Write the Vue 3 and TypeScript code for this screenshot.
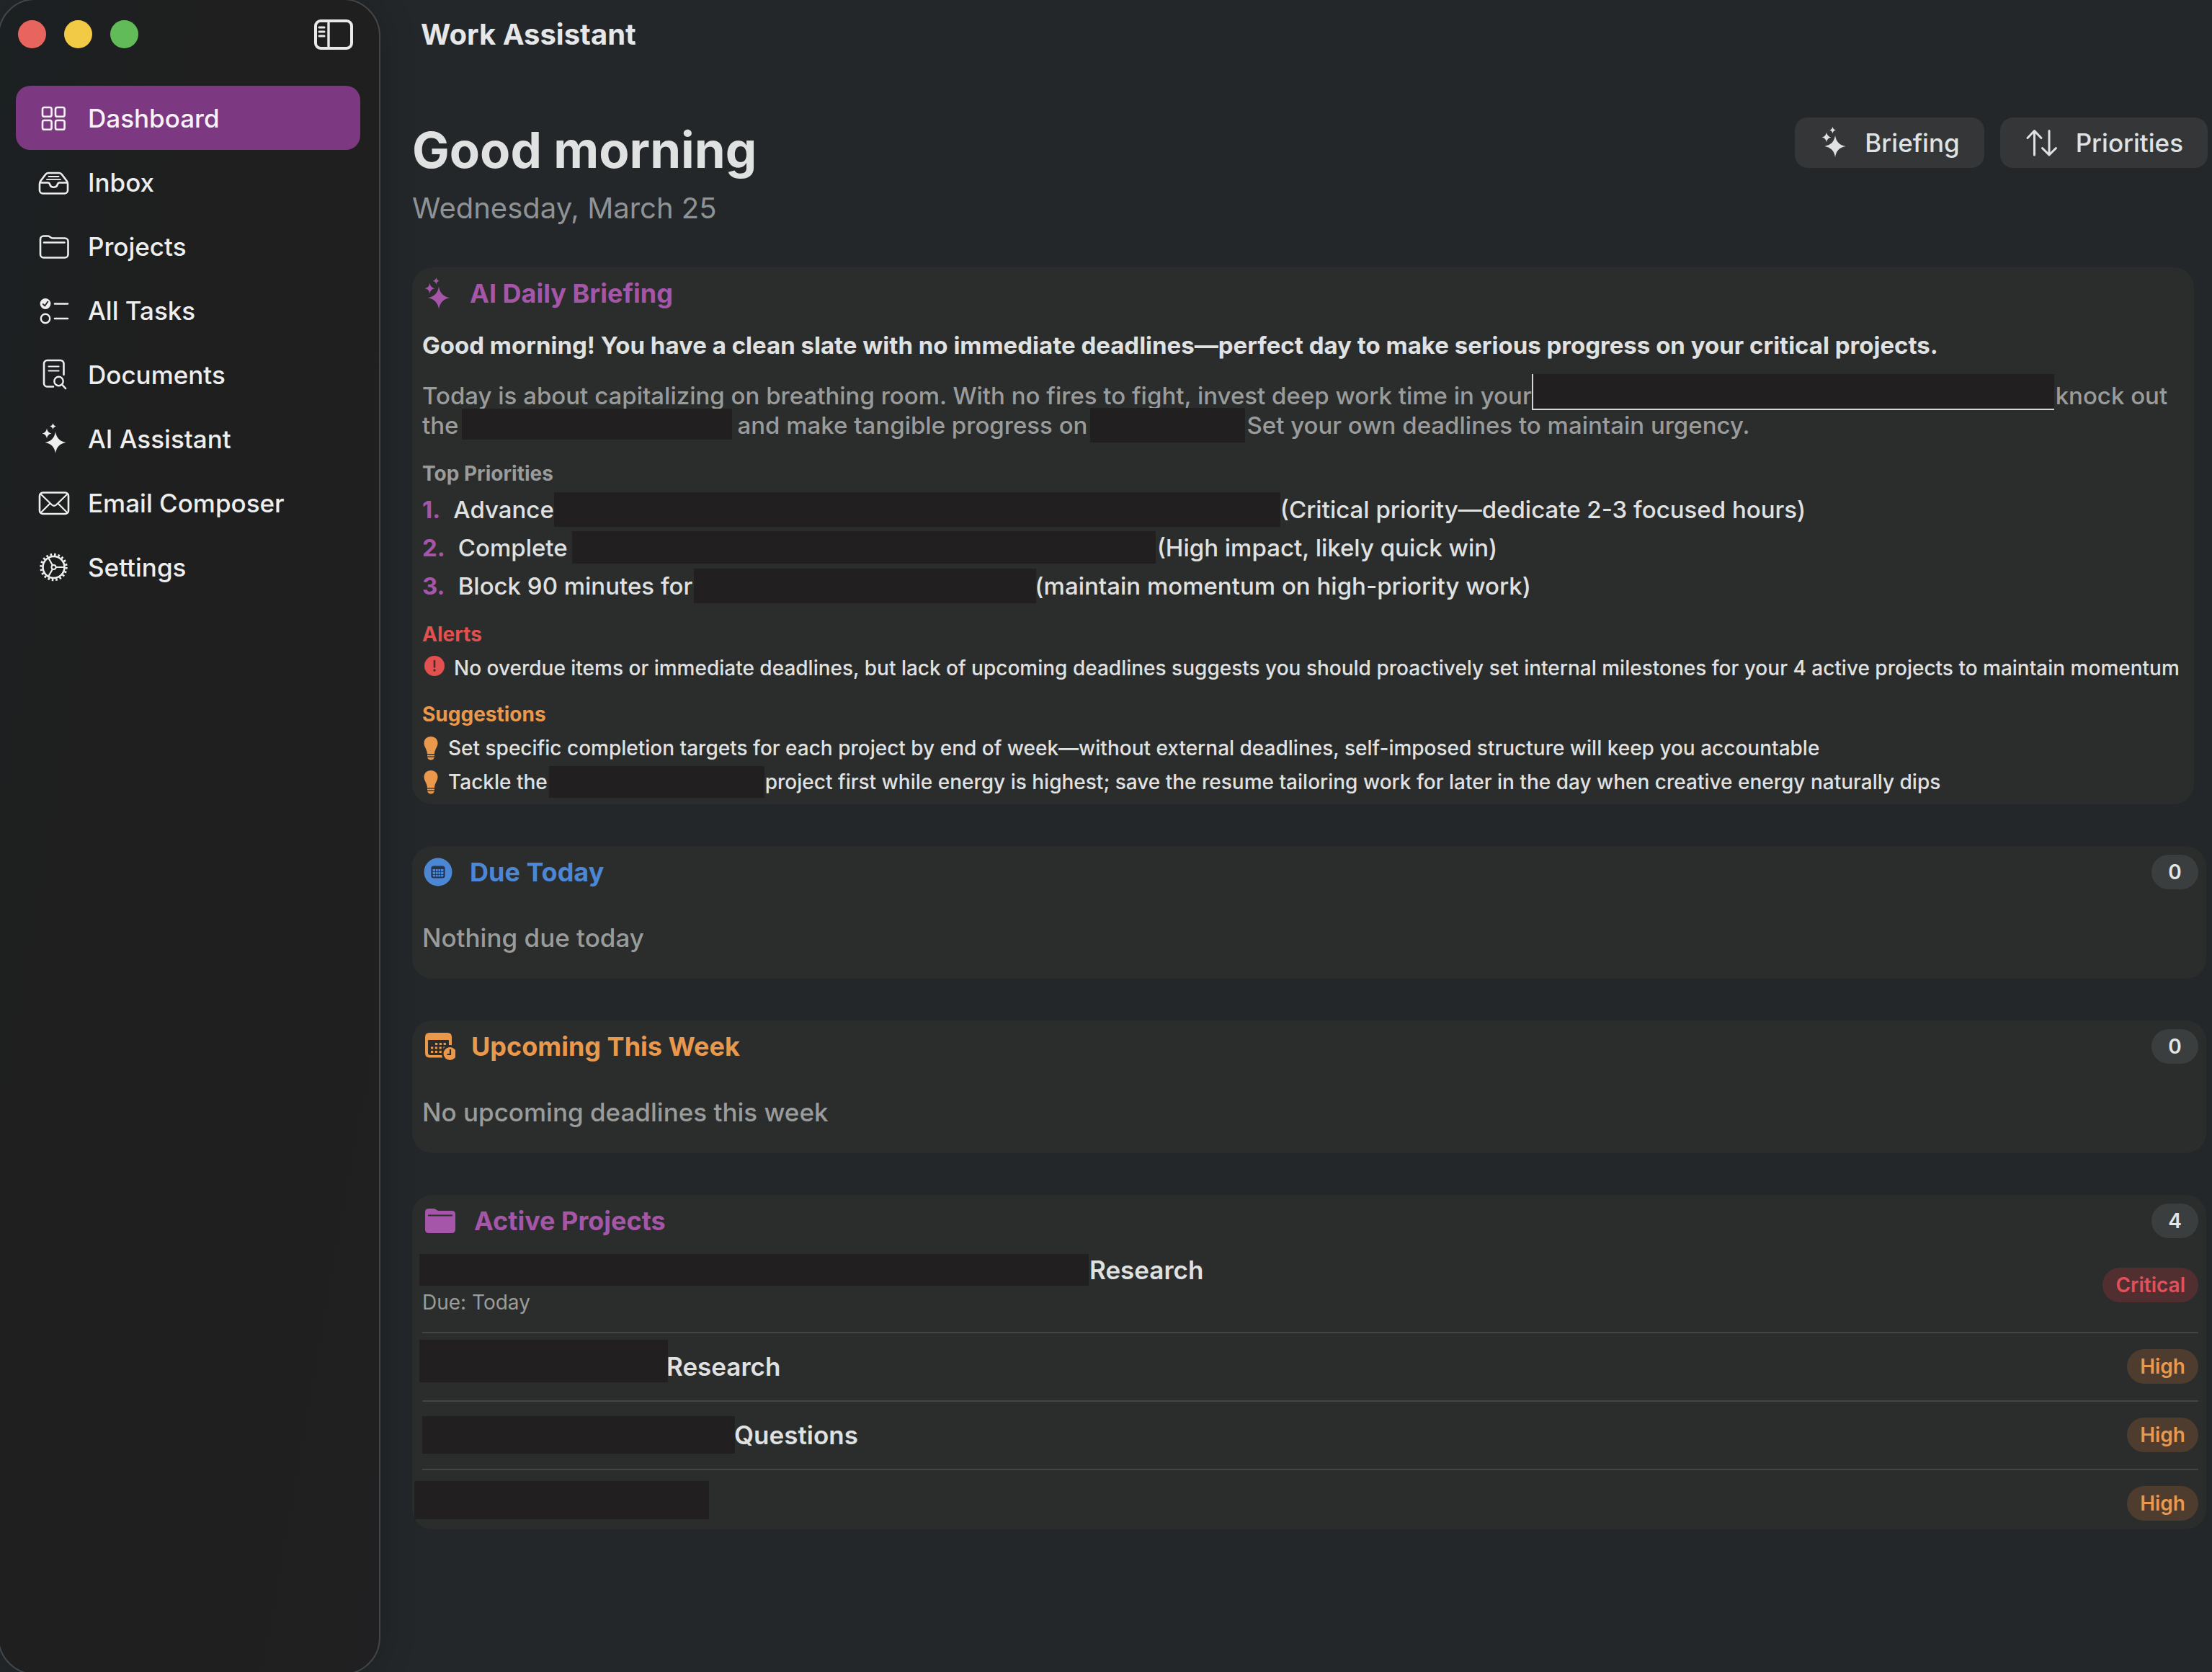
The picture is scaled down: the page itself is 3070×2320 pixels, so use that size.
<script setup lang="ts">
interface NavItem {
  label: string
  icon: string
}

interface Part {
  text?: string
  /** width and height of a hidden passage */
  w?: number
  h?: number
  /** space before and after a hidden passage */
  lead?: number
  trail?: number
  low?: boolean
  edged?: boolean
}

interface Project {
  parts: Part[]
  due?: string
  level: 'Critical' | 'High'
}

const nav: NavItem[] = [
  { label: 'Dashboard', icon: 'grid' },
  { label: 'Inbox', icon: 'tray' },
  { label: 'Projects', icon: 'folder' },
  { label: 'All Tasks', icon: 'checklist' },
  { label: 'Documents', icon: 'document' },
  { label: 'AI Assistant', icon: 'sparkles' },
  { label: 'Email Composer', icon: 'mail' },
  { label: 'Settings', icon: 'gear' },
]

const summary: Part[][] = [
  [
    { text: 'Today is about capitalizing on breathing room. With no fires to fight, invest deep work time in your' },
    { w: 725, h: 50, lead: 0, trail: 2, low: true, edged: true },
    { text: 'knock out' },
  ],
  [
    { text: 'the' },
    { w: 375, h: 43, lead: 4, trail: 8, low: true },
    { text: 'and make tangible progress on' },
    { w: 215, h: 48, lead: 4, trail: 2 },
    { text: 'Set your own deadlines to maintain urgency.' },
  ],
]

const priorities: Part[][] = [
  [{ text: 'Advance' }, { w: 1008, h: 48, lead: 0, trail: 0 }, { text: '(Critical priority—dedicate 2-3 focused hours)' }],
  [{ text: 'Complete' }, { w: 810, h: 45, lead: 6, trail: 2 }, { text: '(High impact, likely quick win)' }],
  [{ text: 'Block 90 minutes for' }, { w: 475, h: 48, lead: 2, trail: -2 }, { text: '(maintain momentum on high-priority work)' }],
]

const alerts: string[] = [
  'No overdue items or immediate deadlines, but lack of upcoming deadlines suggests you should proactively set internal milestones for your 4 active projects to maintain momentum',
]

const suggestions: Part[][] = [
  [
    {
      text: 'Set specific completion targets for each project by end of week—without external deadlines, self-imposed structure will keep you accountable',
    },
  ],
  [
    { text: 'Tackle the' },
    { w: 299, h: 44, lead: 2, trail: 1 },
    {
      text: 'project first while energy is highest; save the resume tailoring work for later in the day when creative energy naturally dips',
    },
  ],
]

const projects: Project[] = [
  { parts: [{ w: 929, h: 44, lead: -4, trail: 1 }, { text: 'Research' }], due: 'Due: Today', level: 'Critical' },
  { parts: [{ w: 345, h: 59, lead: -4, trail: -2, low: true }, { text: 'Research' }], level: 'High' },
  { parts: [{ w: 434, h: 52, lead: 0, trail: -1 }, { text: 'Questions' }], level: 'High' },
  { parts: [{ w: 409, h: 53, lead: -11, trail: 0, low: true }], level: 'High' },
]

function barStyle(p: Part) {
  return {
    width: `${p.w}px`,
    height: `${p.h}px`,
    marginLeft: `${p.lead ?? 0}px`,
    marginRight: `${p.trail ?? 0}px`,
  }
}
</script>

<template>
  <div class="app">
    <aside class="sidebar">
      <header class="sidebar-head">
        <div class="lights">
          <button class="light red" aria-label="Close"></button>
          <button class="light yellow" aria-label="Minimize"></button>
          <button class="light green" aria-label="Zoom"></button>
        </div>
        <button class="toggle" aria-label="Toggle sidebar">
          <svg width="54" height="42" viewBox="0 0 54 42" fill="none" stroke="currentColor">
            <rect x="2" y="2" width="50" height="38" rx="7" stroke-width="4" />
            <path d="M20 3V39" stroke-width="3.4" />
            <path d="M7 11H14M7 17H14M7 23H14" stroke-width="3" stroke-linecap="round" />
          </svg>
        </button>
      </header>

      <nav class="nav">
        <a
          v-for="(item, i) in nav"
          :key="item.label"
          href="#"
          class="nav-item"
          :class="{ active: i === 0 }"
        >
          <svg
            class="nav-icon"
            viewBox="0 0 44 44"
            fill="none"
            stroke="currentColor"
            stroke-width="2.6"
            stroke-linecap="round"
            stroke-linejoin="round"
          >
            <g v-if="item.icon === 'grid'">
              <rect x="7" y="7" width="12.6" height="12.8" rx="2.6" />
              <rect x="25" y="7" width="12.6" height="12.8" rx="2.6" />
              <rect x="7" y="25" width="12.6" height="12.8" rx="2.6" />
              <rect x="25" y="25" width="12.6" height="12.8" rx="2.6" />
            </g>
            <g v-else-if="item.icon === 'tray'">
              <path d="M3 24C3 22 3.4 21.4 4.6 19.8L11 11.2C12.2 9.5 13 9 15 9H30C32 9 32.8 9.5 34 11.2L40.4 19.8C41.6 21.4 42 22 42 24V33A4.5 4.5 0 0 1 37.5 37.5H7.5A4.5 4.5 0 0 1 3 33Z" />
              <path d="M3.5 22.5H14.5C16.5 22.5 16.8 23.5 17.2 25C18.8 30 26.2 30 27.8 25C28.2 23.5 28.5 22.5 30.5 22.5H41.5" />
              <path d="M15.5 14H29.5M13 18.2H32" stroke-width="1.8" />
            </g>
            <g v-else-if="item.icon === 'folder'">
              <path d="M4 33V12A4.5 4.5 0 0 1 8.5 7.5H14.5C17.5 7.5 18 10.5 21 10.5H38A4.5 4.5 0 0 1 42.5 15V33A4.5 4.5 0 0 1 38 37.5H8.5A4.5 4.5 0 0 1 4 33Z" />
              <path d="M9 16.5H37.5" />
            </g>
            <g v-else-if="item.icon === 'checklist'">
              <circle cx="11" cy="12.5" r="7.4" fill="currentColor" stroke="none" />
              <path d="M7.8 13L10.2 15.4L14.3 9.6" stroke="#1f1f20" stroke-width="1.8" />
              <circle cx="11" cy="33" r="6.2" stroke-width="2.4" />
              <path d="M24 12.5H42M24 33H42" />
            </g>
            <g v-else-if="item.icon === 'document'">
              <path d="M36.5 22V6.5A4.5 4.5 0 0 0 32 2H13.5A4.5 4.5 0 0 0 9 6.5V34A4.5 4.5 0 0 0 13.5 38.5H22" />
              <path d="M15.5 10.5H29.5M15.5 16.5H29.5" stroke-width="2.2" />
              <circle cx="29.5" cy="31" r="6.2" stroke-width="2.4" />
              <path d="M34 35.5L39 41" />
            </g>
            <g v-else-if="item.icon === 'sparkles'" fill="currentColor" stroke="none">
              <path d="M25 12Q27 25 39.5 27Q27 29 25 42Q23 29 10.5 27Q23 25 25 12Z" />
              <path d="M13 7.5Q13.9 13.6 19.5 14.5Q13.9 15.4 13 21.5Q12.1 15.4 6.5 14.5Q12.1 13.6 13 7.5Z" />
              <path d="M21.5 0Q22.2 3.9 26 4.5Q22.2 5.1 21.5 9Q20.8 5.1 17 4.5Q20.8 3.9 21.5 0Z" />
            </g>
            <g v-else-if="item.icon === 'mail'">
              <rect x="3" y="7.5" width="40" height="29.5" rx="4.5" />
              <path d="M5 10L20 24.5Q23 27 26 24.5L41 10M5 35L17.5 22.5M41 35L28.5 22.5" stroke-width="2.2" />
            </g>
            <g v-else>
              <circle cx="22.5" cy="22" r="15" />
              <circle cx="22.5" cy="22" r="17.6" stroke-width="3.2" stroke-dasharray="2.6 2.93" stroke-linecap="butt" />
              <circle cx="22.5" cy="22" r="3" stroke-width="2" />
              <path d="M26 22H37M20.8 19L15.2 9.2M20.8 25L15.2 34.8" stroke-width="2.2" />
            </g>
          </svg>
          <span>{{ item.label }}</span>
        </a>
      </nav>
    </aside>

    <main class="main">
      <div class="titlebar">Work Assistant</div>

      <header class="hero">
        <div class="greeting">
          <h1>Good morning</h1>
          <p>Wednesday, March 25</p>
        </div>
        <div class="actions">
          <button class="action">
            <svg width="44" height="44" viewBox="0 0 44 44" fill="currentColor">
              <path d="M25 12Q27 25 39.5 27Q27 29 25 42Q23 29 10.5 27Q23 25 25 12Z" />
              <path d="M13 7.5Q13.9 13.6 19.5 14.5Q13.9 15.4 13 21.5Q12.1 15.4 6.5 14.5Q12.1 13.6 13 7.5Z" />
              <path d="M21.5 0Q22.2 3.9 26 4.5Q22.2 5.1 21.5 9Q20.8 5.1 17 4.5Q20.8 3.9 21.5 0Z" />
            </svg>
            <span>Briefing</span>
          </button>
          <button class="action">
            <svg width="52" height="44" viewBox="0 0 52 44" fill="none" stroke="currentColor" stroke-width="3" stroke-linecap="round" stroke-linejoin="round">
              <path d="M16.5 39V6M7 15.5L16.5 5.5L26 15.5" />
              <path d="M37 5.5V38.5M27.5 29.5L37 39L46.5 29.5" />
            </svg>
            <span>Priorities</span>
          </button>
        </div>
      </header>

      <div class="cards">
        <section class="card briefing">
          <div class="card-head purple">
            <svg width="44" height="44" viewBox="3 0 42 42" fill="currentColor">
              <path d="M25 12Q27 25 39.5 27Q27 29 25 42Q23 29 10.5 27Q23 25 25 12Z" />
              <path d="M13 7.5Q13.9 13.6 19.5 14.5Q13.9 15.4 13 21.5Q12.1 15.4 6.5 14.5Q12.1 13.6 13 7.5Z" />
              <path d="M21.5 0Q22.2 3.9 26 4.5Q22.2 5.1 21.5 9Q20.8 5.1 17 4.5Q20.8 3.9 21.5 0Z" />
            </svg>
            <h2>AI Daily Briefing</h2>
          </div>

          <p class="lead">
            Good morning! You have a clean slate with no immediate deadlines—perfect day to make serious progress on your critical projects.
          </p>

          <div class="summary">
            <div v-for="(line, i) in summary" :key="i" class="line">
              <template v-for="(p, j) in line" :key="j">
                <span v-if="p.text">{{ p.text }}</span>
                <i v-else class="bar" :class="{ low: p.low, edged: p.edged }" :style="barStyle(p)"></i>
              </template>
            </div>
          </div>

          <h3>Top Priorities</h3>
          <ol class="priorities">
            <li v-for="(line, i) in priorities" :key="i" class="line">
              <b class="num">{{ i + 1 }}.</b>
              <template v-for="(p, j) in line" :key="j">
                <span v-if="p.text">{{ p.text }}</span>
                <i v-else class="bar" :style="barStyle(p)"></i>
              </template>
            </li>
          </ol>

          <h3 class="red-text">Alerts</h3>
          <ul class="notes">
            <li v-for="a in alerts" :key="a" class="line">
              <svg class="note-icon red-text" width="32" height="40" viewBox="0 0 32 40">
                <circle cx="17" cy="17" r="14" fill="currentColor" />
                <path d="M17 10V18.5" stroke="#5a2528" stroke-width="2.6" stroke-linecap="round" />
                <circle cx="17" cy="23" r="1.7" fill="#5a2528" />
              </svg>
              <span>{{ a }}</span>
            </li>
          </ul>

          <h3 class="orange-text">Suggestions</h3>
          <ul class="notes">
            <li v-for="(line, i) in suggestions" :key="i" class="line">
              <svg class="note-icon orange-text" width="24" height="40" viewBox="0 0 24 40" fill="currentColor">
                <path d="M12 4C17.5 4 21.5 7.8 21.5 13C21.5 18.5 17.5 21 17 28H7C6.5 21 2.5 18.5 2.5 13C2.5 7.8 6.5 4 12 4Z" />
                <rect x="7" y="29.4" width="10" height="2" />
                <path d="M7 32.8H17C16.5 35.2 14.5 36.4 12 36.4C9.5 36.4 7.5 35.2 7 32.8Z" />
              </svg>
              <template v-for="(p, j) in line" :key="j">
                <span v-if="p.text">{{ p.text }}</span>
                <i v-else class="bar" :style="barStyle(p)"></i>
              </template>
            </li>
          </ul>
        </section>

        <section class="card">
          <div class="card-head blue">
            <svg width="44" height="42" viewBox="0 0 44 42">
              <circle cx="22" cy="21" r="19.5" fill="currentColor" />
              <rect x="13.5" y="13.5" width="17" height="15" rx="2.5" fill="none" stroke="#26354a" stroke-width="2.2" />
              <path d="M13 15.5H31" stroke="#26354a" stroke-width="3" />
              <path d="M18.5 17V28M22 17V28M25.5 17V28M14 20.5H30M14 24.5H30" stroke="#26354a" stroke-width="0.8" />
            </svg>
            <h2>Due Today</h2>
            <span class="pill">0</span>
          </div>
          <p class="empty">Nothing due today</p>
        </section>

        <section class="card">
          <div class="card-head orange">
            <svg width="46" height="42" viewBox="0 0 46 42">
              <path
                fill="currentColor"
                fill-rule="evenodd"
                d="M10 2H35Q41 2 41 8V30Q41 36.5 35 36.5H10Q4 36.5 4 30V8Q4 2 10 2ZM8 13V30Q8 33 11 33H34Q37 33 37 30V13Q37 12 36 12H9Q8 12 8 13Z"
              />
              <path
                d="M18 17.5H35M12 23H35M12 28.5H30"
                stroke="currentColor"
                stroke-width="3.2"
                stroke-dasharray="3.2 2.6"
              />
              <circle cx="39" cy="31" r="12" fill="#2b2d2c" />
              <circle cx="38.5" cy="31" r="9" fill="currentColor" />
              <path d="M39 25V32H34.5" fill="none" stroke="#2b2d2c" stroke-width="2.2" />
            </svg>
            <h2>Upcoming This Week</h2>
            <span class="pill">0</span>
          </div>
          <p class="empty">No upcoming deadlines this week</p>
        </section>

        <section class="card projects">
          <div class="card-head purple">
            <svg width="50" height="42" viewBox="0 0 50 42">
              <path
                d="M4 9Q4 4 9 4H16C19 4 20 7 23 7H41Q46 7 46 12V33Q46 38 41 38H9Q4 38 4 33Z"
                fill="currentColor"
              />
              <path d="M8 13.5H42" stroke="#2b2d2c" stroke-width="2.2" />
            </svg>
            <h2>Active Projects</h2>
            <span class="pill">4</span>
          </div>
          <ul class="rows">
            <li v-for="(p, i) in projects" :key="i" class="row">
              <div class="row-text">
                <div class="line name">
                  <template v-for="(part, j) in p.parts" :key="j">
                    <span v-if="part.text">{{ part.text }}</span>
                    <i v-else class="bar" :class="{ low: part.low }" :style="barStyle(part)"></i>
                  </template>
                </div>
                <div v-if="p.due" class="due">{{ p.due }}</div>
              </div>
              <span class="tag" :class="p.level.toLowerCase()">{{ p.level }}</span>
            </li>
          </ul>
        </section>
      </div>
    </main>
  </div>
</template>

<style>
body {
  background: #23272a;
}
</style>

<style scoped>
* {
  box-sizing: border-box;
}

.app {
  display: flex;
  min-height: 100vh;
  overflow: hidden;
  background: #23272a;
  color: #e0e1e1;
  font-family: Inter, 'Noto Sans', sans-serif;
  white-space: nowrap;
}

h1,
h2,
h3,
p,
ol,
ul {
  margin: 0;
  padding: 0;
  list-style: none;
}

button {
  border: 0;
  padding: 0;
  font: inherit;
  color: inherit;
}

svg {
  display: block;
  flex: none;
}

/* Sidebar */
.sidebar {
  flex: none;
  width: 531px;
  margin: -2px 0 -4px -3px;
  border: 2px solid #434648;
  border-radius: 52px;
  background: linear-gradient(100deg, #1b2022 0%, #1f1f1f 30%, #201f21 100%);
  box-shadow: 0 0 50px rgba(0, 0, 0, 0.18);
}

.sidebar-head {
  display: flex;
  align-items: center;
  justify-content: space-between;
  height: 95px;
  padding: 0 36px 0 26px;
}

.lights {
  display: flex;
  gap: 25px;
}

.light {
  width: 39px;
  height: 39px;
  border-radius: 50%;
}

.light.red {
  background: #e8645f;
}

.light.yellow {
  background: #f2ca45;
}

.light.green {
  background: #62bb59;
}

.toggle {
  background: none;
  color: #e9e9ea;
}

.nav {
  display: flex;
  flex-direction: column;
  padding: 24px 26px 0 23px;
}

.nav-item {
  display: flex;
  align-items: center;
  gap: 26px;
  height: 89px;
  padding-left: 30px;
  border-radius: 20px;
  color: #eeeeef;
  font-size: 35px;
  font-weight: 500;
  text-decoration: none;
}

.nav-item.active {
  background: #7d3882;
  color: #f8f2f8;
}

.nav-icon {
  width: 44px;
  height: 44px;
  overflow: visible;
}

/* Main column */
.main {
  flex: 1;
  min-width: 0;
  padding: 0 6px 0 44px;
}

.titlebar {
  height: 95px;
  padding-left: 12px;
  font-size: 40px;
  font-weight: 650;
  line-height: 95px;
  color: #e6e7e8;
}

.hero {
  display: flex;
  align-items: flex-start;
  justify-content: space-between;
  padding: 68px 0 58px;
}

.greeting h1 {
  padding-top: 4px;
  font-size: 69px;
  font-weight: 700;
  line-height: 82px;
}

.greeting p {
  margin-top: 16px;
  font-size: 40px;
  line-height: 48px;
  color: #8f9396;
}

.actions {
  display: flex;
  gap: 22px;
}

.action {
  display: flex;
  align-items: center;
  gap: 22px;
  height: 70px;
  padding: 0 34px 0 31px;
  border-radius: 18px;
  background: #343638;
  color: #dfe1e2;
  font-size: 35px;
  font-weight: 500;
}

.cards {
  display: flex;
  flex-direction: column;
  gap: 58px;
  padding-right: 2px;
}

.card {
  padding: 12px 11px 35px 14px;
  border-radius: 28px;
  background: #2b2d2c;
}

.card.briefing {
  margin-right: 17px;
  padding-bottom: 8px;
}

.card.projects {
  padding-bottom: 0;
}

.card-head {
  display: flex;
  align-items: center;
  gap: 22px;
  height: 48px;
}

.card-head h2 {
  font-size: 36px;
  font-weight: 700;
  line-height: 48px;
}

.purple {
  color: #a656a9;
}

.blue {
  color: #4b87d4;
}

.orange,
.orange-text {
  color: #ea984c;
}

.red-text {
  color: #e2504f;
}

.pill,
.tag {
  flex: none;
  height: 48px;
  border-radius: 24px;
  font-size: 28px;
  font-weight: 600;
  line-height: 48px;
  text-align: center;
}

.pill {
  width: 65px;
  margin-left: auto;
  background: #3b3e3f;
  color: #e4e5e5;
}

.lead {
  margin-top: 28px;
  font-size: 33px;
  font-weight: 700;
  line-height: 40px;
}

.line {
  display: flex;
  align-items: center;
}

.bar {
  flex: none;
  background: #221f20;
}

.bar.low {
  align-self: flex-end;
}

.bar.edged {
  border-bottom: 2px solid #d5d6d6;
  border-left: 2px solid #d5d6d6;
}

.summary {
  margin-top: 29px;
  color: #9a9c9c;
  font-size: 33px;
  font-weight: 500;
}

.summary .line {
  height: 41px;
}

.briefing h3 {
  margin-top: 23px;
  font-size: 28px;
  font-weight: 700;
  line-height: 36px;
}

.summary + h3 {
  margin-top: 29px;
  color: #9a9c9c;
}

.priorities,
.notes {
  margin-top: 5px;
}

.priorities .line {
  height: 53px;
  font-size: 33px;
  font-weight: 500;
}

.priorities .num {
  margin-right: 18px;
  font-weight: 700;
  color: #a656a9;
}

.notes .line {
  height: 47px;
  font-size: 28px;
  font-weight: 500;
}

.note-icon {
  margin-right: 12px;
}

.empty {
  margin-top: 45px;
  font-size: 35px;
  font-weight: 500;
  line-height: 44px;
  color: #9a9c9c;
}

.row {
  display: flex;
  align-items: center;
  justify-content: space-between;
  padding: 22px 0 23px;
  border-bottom: 2px solid #414545;
}

.row:last-child {
  padding-bottom: 12px;
  border-bottom: 0;
}

.name {
  height: 44px;
  font-size: 35px;
  font-weight: 600;
}

.due {
  margin-top: 5px;
  font-size: 28px;
  line-height: 36px;
  color: #9a9c9c;
}

.tag {
  padding: 0 18px;
}

.tag.critical {
  background: #512f31;
  color: #e3505a;
}

.tag.high {
  background: #4e3d2f;
  color: #e9984e;
}
</style>
